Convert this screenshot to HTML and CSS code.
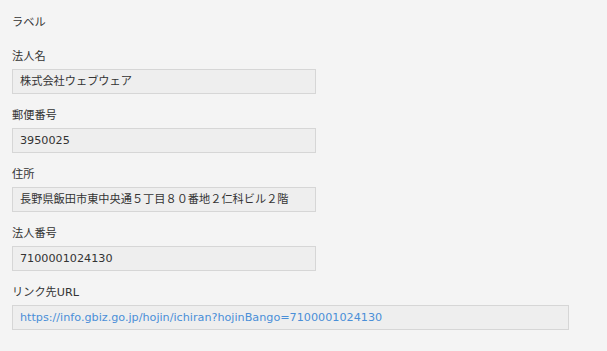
FILE: index.html
```html
<!DOCTYPE html>
<html lang="ja">
<head>
    <meta charset="UTF-8">
    <title>ラベル</title>
    <link rel="stylesheet" href="styles.css">
</head>
<body>
    <div class="record">
        <div class="record-title">ラベル</div>

        <div class="field">
            <div class="field-label">法人名</div>
            <div class="field-value">株式会社ウェブウェア</div>
        </div>

        <div class="field">
            <div class="field-label">郵便番号</div>
            <div class="field-value">3950025</div>
        </div>

        <div class="field">
            <div class="field-label">住所</div>
            <div class="field-value">長野県飯田市東中央通５丁目８０番地２仁科ビル２階</div>
        </div>

        <div class="field">
            <div class="field-label">法人番号</div>
            <div class="field-value">7100001024130</div>
        </div>

        <div class="field">
            <div class="field-label">リンク先URL</div>
            <div class="field-value wide">
                <a href="https://info.gbiz.go.jp/hojin/ichiran?hojinBango=7100001024130">https://info.gbiz.go.jp/hojin/ichiran?hojinBango=7100001024130</a>
            </div>
        </div>
    </div>
</body>
</html>
```

FILE: styles.css
```css
html,
body {
    margin: 0;
    padding: 0;
    background: #f4f4f4;
}

body {
    font-family: "DejaVu Sans", "Noto Sans CJK JP", sans-serif;
    font-size: 11.2px;
    color: #333;
}

.record {
    padding: 15px 12px;
}

.record-title {
    line-height: 16px;
    margin-bottom: 18px;
}

.field {
    margin-bottom: 14px;
}

.field-label {
    line-height: 16px;
    margin-bottom: 4px;
}

.field-value {
    box-sizing: border-box;
    width: 304px;
    height: 25px;
    line-height: 23px;
    padding: 0 7px;
    background: #eeeeee;
    border: 1px solid #d6d6d6;
    white-space: nowrap;
}

.field-value.wide {
    width: 557px;
}

.field-value a {
    color: #4a8fd8;
    text-decoration: none;
}
```
